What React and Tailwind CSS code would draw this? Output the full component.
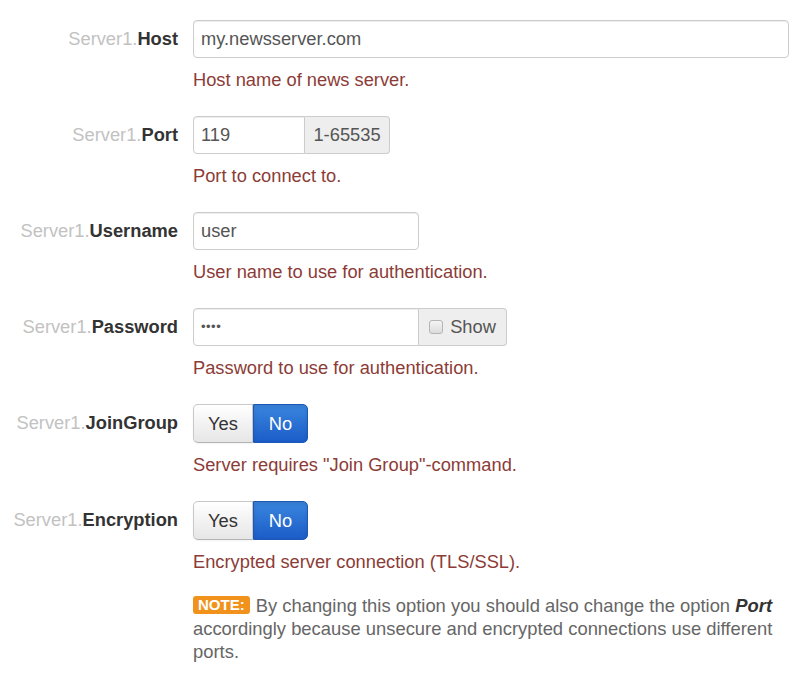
import React from 'react';

const font = { fontFamily: '"Liberation Sans", Arial, sans-serif' };

function Label({ name }) {
  return (
    <div className="w-[178px] shrink-0 h-[38px] flex items-center justify-end text-[18.3px]">
      <span className="text-[#c2c2c2]">Server1.</span>
      <span className="font-bold text-[#333]">{name}</span>
    </div>
  );
}

function Help({ children }) {
  return <div className="mt-[9px] text-[18.3px] leading-[25px] text-[#8c3c37]">{children}</div>;
}

const inputCls =
  'h-[38px] border border-[#cccccc] bg-white px-[7px] flex items-center text-[18.3px] text-[#555] shadow-[inset_0_1px_1px_rgba(0,0,0,0.075)]';
const addonCls =
  'h-[38px] border border-[#cccccc] border-l-0 bg-[#eeeeee] rounded-r-[4px] flex items-center justify-center text-[18.3px] text-[#555]';

function Toggle() {
  return (
    <div className="flex h-[39px] text-[18.3px]">
      <div className="w-[60px] flex items-center justify-center rounded-l-[5px] border border-[#c8c8c8] border-b-[#b3b3b3] bg-gradient-to-b from-white to-[#e6e6e6] text-[#333] shadow-[inset_0_1px_0_rgba(255,255,255,0.2),0_1px_2px_rgba(0,0,0,0.05)]">
        Yes
      </div>
      <div className="w-[55px] flex items-center justify-center rounded-r-[5px] border border-[#1d57b8] bg-gradient-to-b from-[#3a86de] to-[#1c5cc8] text-white shadow-[inset_0_2px_4px_rgba(0,0,0,0.1)]">
        No
      </div>
    </div>
  );
}

function Row({ name, help, children }) {
  return (
    <div className="flex gap-[15px] mb-[24px]">
      <Label name={name} />
      <div className="flex-1">
        {children}
        {help && <Help>{help}</Help>}
      </div>
    </div>
  );
}

export default function App() {
  return (
    <div className="w-[805px] h-[695px] bg-white pt-[20px] overflow-hidden" style={font}>
      <Row name="Host" help="Host name of news server.">
        <div className={`${inputCls} w-[596px] rounded-[4px]`}>my.newsserver.com</div>
      </Row>

      <Row name="Port" help="Port to connect to.">
        <div className="flex">
          <div className={`${inputCls} w-[112px] rounded-l-[4px]`}>119</div>
          <div className={`${addonCls} w-[85px]`}>1-65535</div>
        </div>
      </Row>

      <Row name="Username" help="User name to use for authentication.">
        <div className={`${inputCls} w-[226px] rounded-[4px]`}>user</div>
      </Row>

      <Row name="Password" help="Password to use for authentication.">
        <div className="flex">
          <div className={`${inputCls} w-[226px] rounded-l-[4px] text-[#444]`}>
            <span className="text-[13px] tracking-[0.5px]">••••</span>
          </div>
          <div className={`${addonCls} w-[88px] gap-[7px]`}>
            <span className="w-[14px] h-[14px] rounded-[3px] border border-[#b5b5b5] bg-gradient-to-b from-[#f4f4f4] to-[#dcdcdc]" />
            <span>Show</span>
          </div>
        </div>
      </Row>

      <Row name="JoinGroup" help={'Server requires "Join Group"-command.'}>
        <Toggle />
      </Row>

      <div className="flex gap-[15px]">
        <Label name="Encryption" />
        <div className="flex-1">
          <Toggle />
          <Help>Encrypted server connection (TLS/SSL).</Help>
          <p className="mt-[20px] w-[596px] text-[18.4px] leading-[23px] text-[#666]">
            <span className="inline-block align-[2px] mr-[6px] px-[5px] rounded-[3px] bg-[#f0921c] text-white font-bold text-[15px] leading-[18px]">
              NOTE:
            </span>
            By changing this option you should also change the option{' '}
            <b className="italic text-[#333]">Port</b> accordingly because unsecure and encrypted
            connections use different ports.
          </p>
        </div>
      </div>
    </div>
  );
}
